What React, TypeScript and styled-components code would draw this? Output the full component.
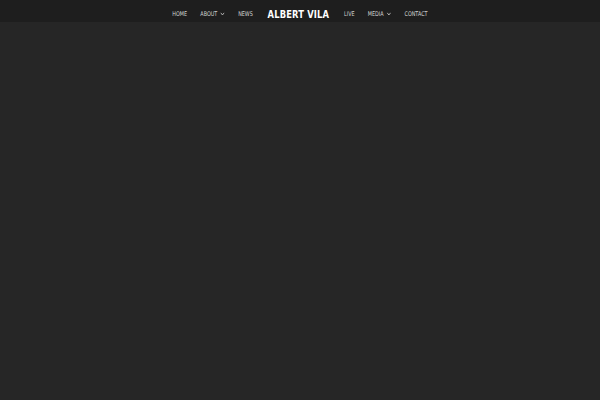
import React from "react";
import styled, { createGlobalStyle } from "styled-components";

const Global = createGlobalStyle`
  html, body { margin: 0; padding: 0; background: #262626; height: 100%; }
  #root { min-height: 100vh; }
`;

const Page = styled.div`
  width: 100%;
  min-height: 100vh;
  background: #262626;
`;

const Header = styled.header`
  height: 22px;
  background: #1e1e1e;
  display: flex;
  align-items: center;
  justify-content: center;
  padding-top: 6px;
  box-sizing: border-box;
`;

const Nav = styled.nav`
  display: flex;
  align-items: center;
  gap: 17.5px;
  transform: scaleX(0.76);
`;

const Item = styled.a`
  display: flex;
  align-items: center;
  gap: 4px;
  font-family: "DejaVu Sans", sans-serif;
  font-size: 6.4px;
  color: #d4d4d4;
  text-transform: uppercase;
  text-decoration: none;
  line-height: 1;
  -webkit-font-smoothing: antialiased;
`;

const Brand = styled.a`
  font-family: "DejaVu Sans", sans-serif;
  font-weight: bold;
  font-size: 11px;
  letter-spacing: 0.2px;
  color: #ffffff;
  margin: 0 2px;
  line-height: 1;
  -webkit-font-smoothing: antialiased;
`;

const Chevron = () => (
  <svg width="6" height="4" viewBox="0 0 6 4">
    <path d="M0.8 0.8 L3 3 L5.2 0.8" fill="none" stroke="#cfcfcf" strokeWidth="0.9" />
  </svg>
);

export default function App() {
  return (
    <Page>
      <Global />
      <Header>
        <Nav>
          <Item>Home</Item>
          <Item>About <Chevron /></Item>
          <Item>News</Item>
          <Brand>ALBERT VILA</Brand>
          <Item>Live</Item>
          <Item>Media <Chevron /></Item>
          <Item>Contact</Item>
        </Nav>
      </Header>
    </Page>
  );
}
